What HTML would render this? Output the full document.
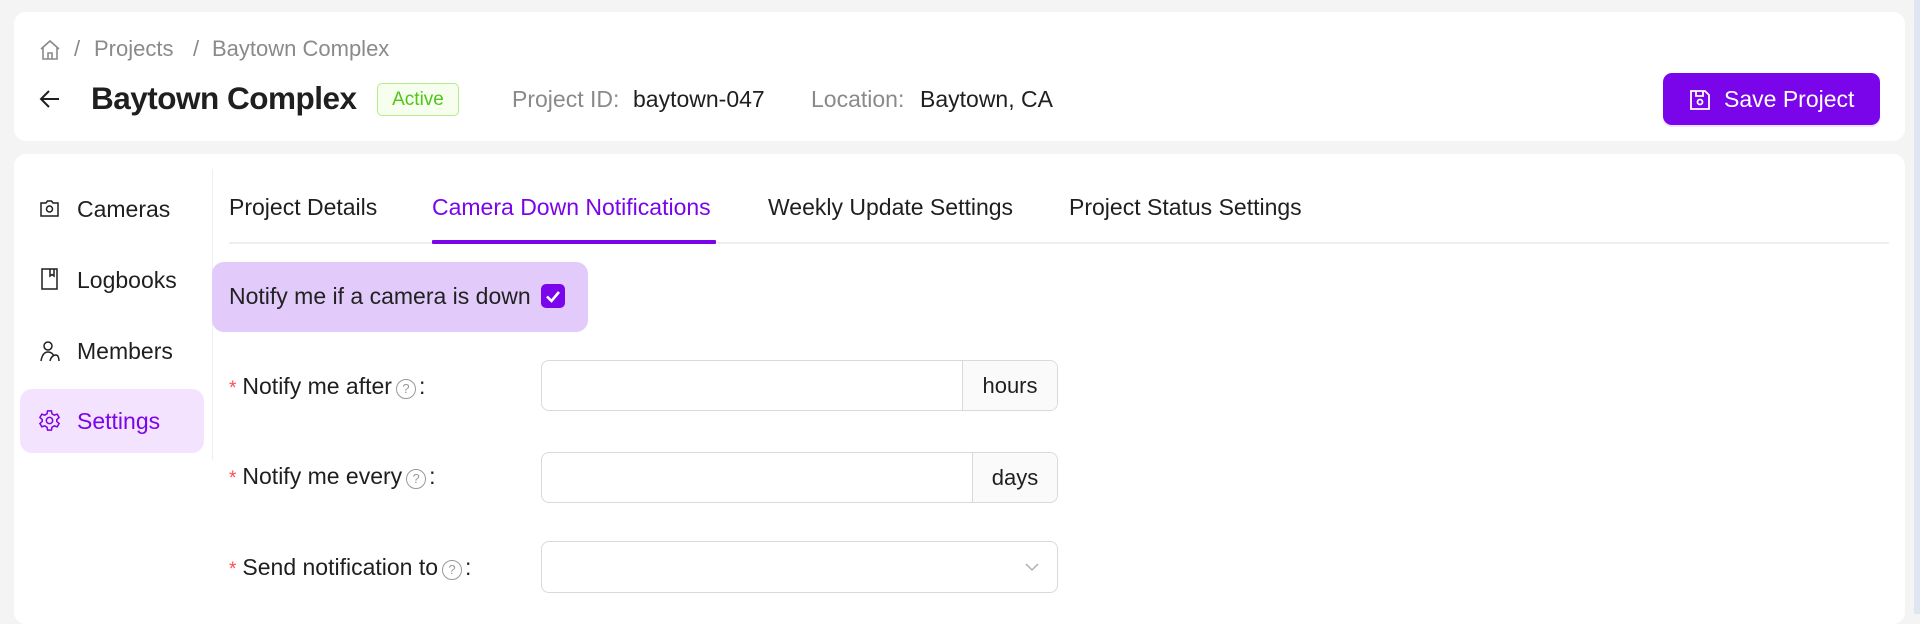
<!DOCTYPE html>
<html><head><meta charset="utf-8"><style>
*{box-sizing:border-box;margin:0;padding:0}
body{width:1920px;height:614px;background:#f4f4f4;font-family:"Liberation Sans",sans-serif;position:relative;overflow:hidden;color:#1f1f1f}
.abs{position:absolute}
.card{position:absolute;background:#fff;border-radius:12px}
.t{position:absolute;white-space:nowrap;line-height:1}
.gray{color:#8a8a8a}
.purple{color:#7a05ea}
.input{position:absolute;border:1px solid #d9d9d9;border-radius:8px;background:#fff;overflow:hidden}
.addon{position:absolute;top:0;bottom:0;right:0;background:#fafafa;border-left:1px solid #d9d9d9;font-size:22px;display:flex;align-items:center;justify-content:center}
.q{display:inline-block;width:20px;height:20px;border:1.5px solid #999;border-radius:50%;font-size:13px;color:#999;text-align:center;line-height:17px;vertical-align:1px;margin:0 3px 0 4px}
.star{color:#ff4d4f;font-size:19px;margin-right:6px}
.f{font-size:23px}
</style></head><body>
<div class="abs" style="right:0;top:0;width:6px;height:614px;background:#dfe6f3"></div>
<div class="card" style="left:14px;top:12px;width:1891px;height:129px"></div>
<svg class="abs" style="left:38px;top:38px" width="24" height="24" viewBox="0 0 24 24" fill="none" stroke="#8a8a8a" stroke-width="1.6"><path d="M3 11 L12 3 L21 11 M5 9 V21 H19 V9 M10 21 V15 H14 V21"/></svg>
<div class="t gray" style="left:74px;top:38px;font-size:22px">/</div>
<div class="t gray" style="left:94px;top:38px;font-size:22px">Projects</div>
<div class="t gray" style="left:193px;top:38px;font-size:22px">/</div>
<div class="t gray" style="left:212px;top:38px;font-size:22px">Baytown Complex</div>
<svg class="abs" style="left:38px;top:87px" width="24" height="24" viewBox="0 0 24 24" fill="none" stroke="#1f1f1f" stroke-width="2"><path d="M21 12 H4 M11 4 L3 12 L11 20"/></svg>
<div class="t" style="left:91px;top:83px;font-size:31.5px;font-weight:bold;letter-spacing:-0.5px">Baytown Complex</div>
<div class="abs" style="left:377px;top:83px;width:82px;height:33px;border:1px solid #b7eb8f;background:#f6ffed;border-radius:5px;color:#52c41a;font-size:19px;text-align:center;line-height:31px">Active</div>
<div class="t gray f" style="left:512px;top:88px">Project ID:</div>
<div class="t f" style="left:633px;top:88px">baytown-047</div>
<div class="t gray f" style="left:811px;top:88px">Location:</div>
<div class="t f" style="left:920px;top:88px">Baytown, CA</div>
<div class="abs" style="left:1663px;top:73px;width:217px;height:52px;background:#7a05ea;border-radius:9px;box-shadow:0 2px 0 #f0e0ff"></div>
<svg class="abs" style="left:1689px;top:89px" width="22" height="22" viewBox="0 0 22 22" fill="none" stroke="#fff" stroke-width="1.8"><path d="M2 2 H16 L20 6 V20 H2 Z M7 2 V7 H14 V2"/><circle cx="11" cy="13" r="2.5"/></svg>
<div class="t" style="left:1724px;top:88px;font-size:23px;color:#fff">Save Project</div>

<div class="card" style="left:14px;top:154px;width:1891px;height:470px"></div>
<div class="abs" style="left:212px;top:169px;width:1px;height:291px;background:#eee"></div>
<svg class="abs" style="left:39px;top:198px" width="21" height="21" viewBox="0 0 21 21" fill="none" stroke="#1f1f1f" stroke-width="1.5"><path d="M2 5 H7 L8.5 3 H12.5 L14 5 H19 V18 H2 Z"/><circle cx="10.5" cy="11" r="3"/></svg>
<div class="t f" style="left:77px;top:198px">Cameras</div>
<svg class="abs" style="left:39px;top:268px" width="21" height="22" viewBox="0 0 21 22" fill="none" stroke="#1f1f1f" stroke-width="1.5"><path d="M3 1 H18 V21 H3 Z M11 1 V8 L13 6.5 L15 8 V1"/></svg>
<div class="t f" style="left:77px;top:269px">Logbooks</div>
<svg class="abs" style="left:39px;top:340px" width="21" height="22" viewBox="0 0 21 22" fill="none" stroke="#1f1f1f" stroke-width="1.5"><circle cx="9" cy="6" r="4"/><path d="M2 21 C3 15 5 12 9 12 C12 12 14 14 15 16 M11 21 C12 17 14 15 17 15 C19 15 20 18 20 21"/></svg>
<div class="t f" style="left:77px;top:340px">Members</div>
<div class="abs" style="left:20px;top:389px;width:184px;height:64px;background:#f4e3fe;border-radius:12px"></div>
<svg class="abs" style="left:38px;top:409px" width="23" height="23" viewBox="0 0 24 24" fill="none" stroke="#7a05ea" stroke-width="1.6"><path d="M10 2 H14 L14.6 5 L17 6.4 L20 5.4 L22 8.8 L19.6 11 V13 L22 15.2 L20 18.6 L17 17.6 L14.6 19 L14 22 H10 L9.4 19 L7 17.6 L4 18.6 L2 15.2 L4.4 13 V11 L2 8.8 L4 5.4 L7 6.4 L9.4 5 Z"/><circle cx="12" cy="12" r="3.3"/></svg>
<div class="t purple f" style="left:77px;top:410px">Settings</div>

<div class="t f" style="left:229px;top:196px">Project Details</div>
<div class="t purple f" style="left:432px;top:196px">Camera Down Notifications</div>
<div class="t f" style="left:768px;top:196px">Weekly Update Settings</div>
<div class="t f" style="left:1069px;top:196px">Project Status Settings</div>
<div class="abs" style="left:229px;top:242px;width:1660px;height:2px;background:#eeeeee"></div>
<div class="abs" style="left:432px;top:240px;width:284px;height:4px;background:#7a05ea;border-radius:1px"></div>

<div class="abs" style="left:212px;top:262px;width:376px;height:70px;background:#e2cbfa;border-radius:12px"></div>
<div class="t f" style="left:229px;top:285px;color:#222">Notify me if a camera is down</div>
<div class="abs" style="left:541px;top:284px;width:24px;height:24px;background:#7a05ea;border-radius:5px"></div>
<svg class="abs" style="left:541px;top:284px" width="24" height="24" viewBox="0 0 24 24" fill="none" stroke="#fff" stroke-width="2.6"><path d="M6 12.5 L10.5 17 L18 8"/></svg>

<div class="t f" style="left:229px;top:375px"><span class="star">*</span>Notify me after<span class="q">?</span>:</div>
<div class="input" style="left:541px;top:360px;width:517px;height:51px"><div class="addon" style="width:95px">hours</div></div>
<div class="t f" style="left:229px;top:465px"><span class="star">*</span>Notify me every<span class="q">?</span>:</div>
<div class="input" style="left:541px;top:452px;width:517px;height:51px"><div class="addon" style="width:85px">days</div></div>
<div class="t f" style="left:229px;top:556px"><span class="star">*</span>Send notification to<span class="q">?</span>:</div>
<div class="input" style="left:541px;top:541px;width:517px;height:52px"></div>
<svg class="abs" style="left:1024px;top:561px" width="16" height="12" viewBox="0 0 16 12" fill="none" stroke="#b0b0b0" stroke-width="1.5"><path d="M2 3 L8 9 L14 3"/></svg>
</body></html>
